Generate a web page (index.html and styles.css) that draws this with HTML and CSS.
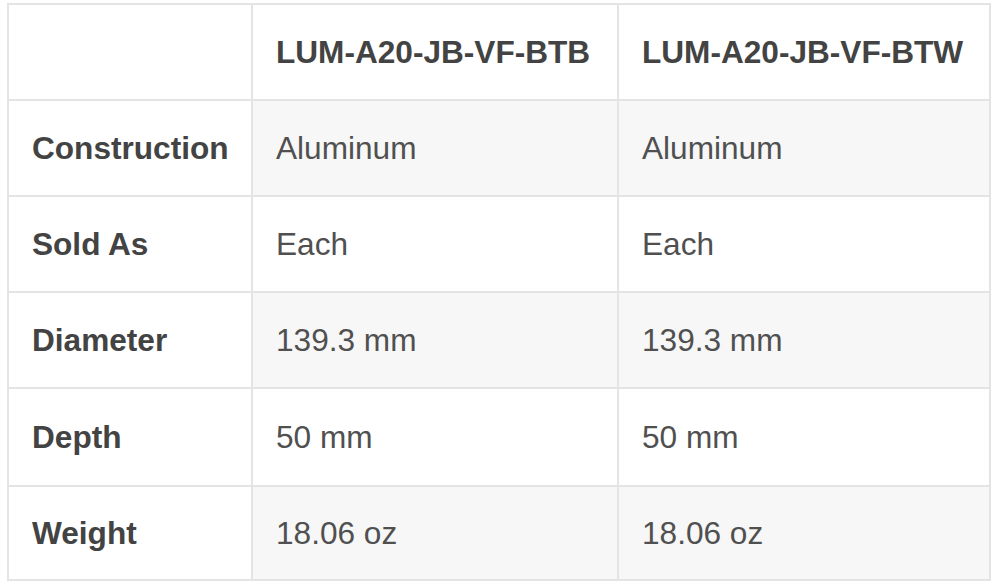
FILE: index.html
```html
<!DOCTYPE html>
<html>
<head>
<meta charset="utf-8">
<link rel="stylesheet" href="styles.css">
</head>
<body>
<table class="spec">
  <colgroup>
    <col class="c1"><col class="c2"><col class="c3">
  </colgroup>
  <thead>
    <tr><th></th><th>LUM-A20-JB-VF-BTB</th><th>LUM-A20-JB-VF-BTW</th></tr>
  </thead>
  <tbody>
    <tr class="odd"><th>Construction</th><td>Aluminum</td><td>Aluminum</td></tr>
    <tr><th>Sold As</th><td>Each</td><td>Each</td></tr>
    <tr class="odd"><th>Diameter</th><td>139.3 mm</td><td>139.3 mm</td></tr>
    <tr class="tall"><th>Depth</th><td>50 mm</td><td>50 mm</td></tr>
    <tr class="odd last"><th>Weight</th><td>18.06 oz</td><td>18.06 oz</td></tr>
  </tbody>
</table>
</body>
</html>
```
FILE: styles.css
```css
html, body {
  margin: 0;
  padding: 0;
  background: #ffffff;
}
body {
  padding: 3px 0 0 7px;
  font-family: "Liberation Sans", Arial, sans-serif;
}
.spec {
  border-collapse: collapse;
  table-layout: fixed;
  width: 982px;
  font-size: 31.6px;
  color: #505050;
}
.c1 { width: 244px; }
.c2 { width: 366px; }
.c3 { width: 372px; }
.spec th, .spec td {
  border: 2px solid #e4e4e4;
  padding: 29px 22px 29px 23px;
  line-height: 36px;
  text-align: left;
  vertical-align: middle;
  white-space: nowrap;
}
.spec tr.tall th,
.spec tr.tall td {
  padding-top: 30px;
  padding-bottom: 30px;
}
.spec tr.last th,
.spec tr.last td {
  padding-top: 28px;
  padding-bottom: 28px;
}
.spec th {
  font-weight: bold;
  color: #434343;
  background: #ffffff;
}
.spec td {
  font-weight: normal;
  background: #ffffff;
}
.spec tr.odd td {
  background: #f7f7f7;
}
```
